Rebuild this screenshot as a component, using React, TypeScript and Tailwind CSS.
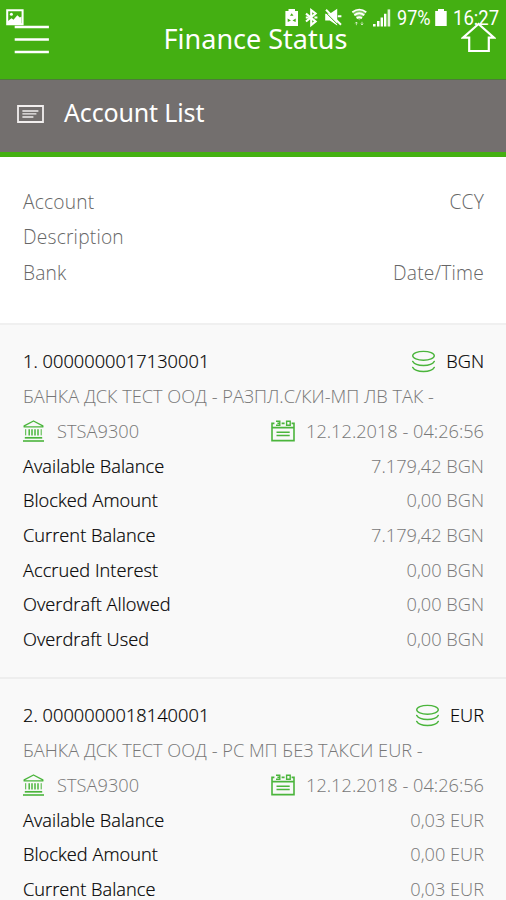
interface BalanceRow {
  label: string;
  amount: string;
}

interface Account {
  number: string;
  currency: string;
  description: string;
  bank: string;
  updatedAt: string;
  balances: BalanceRow[];
}

const accounts: Account[] = [
  {
    number: "1. 0000000017130001",
    currency: "BGN",
    description: "БАНКА ДСК ТЕСТ ООД - РАЗПЛ.С/КИ-МП ЛВ ТАК -",
    bank: "STSA9300",
    updatedAt: "12.12.2018 - 04:26:56",
    balances: [
      { label: "Available Balance", amount: "7.179,42 BGN" },
      { label: "Blocked Amount", amount: "0,00 BGN" },
      { label: "Current Balance", amount: "7.179,42 BGN" },
      { label: "Accrued Interest", amount: "0,00 BGN" },
      { label: "Overdraft Allowed", amount: "0,00 BGN" },
      { label: "Overdraft Used", amount: "0,00 BGN" },
    ],
  },
  {
    number: "2. 0000000018140001",
    currency: "EUR",
    description: "БАНКА ДСК ТЕСТ ООД - РС МП БЕЗ ТАКСИ EUR -",
    bank: "STSA9300",
    updatedAt: "12.12.2018 - 04:26:56",
    balances: [
      { label: "Available Balance", amount: "0,03 EUR" },
      { label: "Blocked Amount", amount: "0,00 EUR" },
      { label: "Current Balance", amount: "0,03 EUR" },
    ],
  },
];

const CoinsIcon = () => (
  <svg width="24" height="24" viewBox="0 0 24 24" fill="none" stroke="#4bb53c" strokeWidth="1.4" strokeLinecap="round">
    <ellipse cx="12.5" cy="5.8" rx="10.8" ry="4.4" />
    <path d="M1.7 11.4c1.6 2.8 5.8 4.1 10.8 4.1s9.2-1.3 10.8-4.1" />
    <path d="M1.7 17.4c1.6 2.8 5.8 4.1 10.8 4.1s9.2-1.3 10.8-4.1" />
  </svg>
);

const BankIcon = () => (
  <svg width="21" height="22" viewBox="0 0 21 22" fill="none" stroke="#4bb53c" strokeWidth="1.4">
    <path d="M1.2 6.9V5.8L10.5 1l9.3 4.8v1.1z" strokeLinejoin="round" />
    <path d="M2.7 9.2v6.2M18.2 9.2v6.2" strokeWidth="1" />
    <path d="M6.2 9.2v6.2M9 9.2v6.2M12 9.2v6.2M15 9.2v6.2" strokeWidth="1.5" />
    <path d="M1.8 17.8h17.4" strokeWidth="1.7" />
    <path d="M0 21h21" strokeWidth="1.6" />
  </svg>
);

const CalendarIcon = () => (
  <svg width="24" height="22" viewBox="0 0 24 22" fill="none" stroke="#4bb53c" strokeWidth="1.6">
    <path d="M3.4 3.4H1v17.2h22V3.4h-2.4M10.6 3.4h3M1 7.6h22" />
    <path d="M5 1.3h3.8v3.9H5M6.4 3.3h2.2M15.6 1.3h3.6v3.9h-3.6z" strokeWidth="1.4" />
    <path d="M5.5 12.3h13.2M5.5 15.4h13.2" strokeWidth="1.5" />
  </svg>
);

const StatusBar = () => (
  <div className="absolute inset-x-0 top-0 h-9 text-white">
    <svg className="absolute left-0 top-0" width="30" height="30" viewBox="0 0 30 30">
      <path d="M7.2 10.2h15.4v14H7.2z" fill="none" stroke="white" strokeWidth="2" />
      <circle cx="11.4" cy="14.2" r="1.5" fill="white" />
      <path d="M8 21l3.5-2.8 2 1.6 3.8-4.6 2.6 2.4 1.6-1V24H8z" fill="white" />
    </svg>
    <svg className="absolute left-[280px] top-0" width="226" height="34" viewBox="280 0 226 34" fill="white">
      <path fillRule="evenodd" d="M288.5 9h6.5v2h3v15h-12.6V11h3.1zM291.7 13.2l-1.7 2.6h3.5zM287.6 18.5l.2 3.6 3.1-1.7zM295.8 18.5l-.2 3.6-3.1-1.7z" />
      <path d="M306 13.6l9.6 7.8-4.4 3.6V10.2l4.4 3.3-9.6 8" fill="none" stroke="white" strokeWidth="2.1" />
      <path d="M305.8 17.5h3M314.4 17.5h3" stroke="white" strokeWidth="2" />
      <path d="M325.2 13.8h4.6l7.4-5v16.8l-7.4-5.2h-4.6z" />
      <path d="M324.4 11.2l14 14" stroke="#44af12" strokeWidth="1" />
      <path d="M326 9.8l15 15M337.8 16.2h3.6" stroke="white" strokeWidth="2" />
      <path d="M352.5 12.6q6.8-5.4 13.6 0l-6.8 7.8z" opacity=".35" />
      <path d="M352.3 12.3q7-5.4 14 0M354.3 15.2q5-4 10 0M356.6 18.3q2.7-2.2 5.4 0" fill="none" stroke="white" strokeWidth="1.8" />
      <path d="M356.4 25.2v-3M355.2 23.4l1.2-1.4 1.2 1.4M362 21.8v3M360.8 23.6l1.2 1.4 1.2-1.4" fill="none" stroke="white" strokeWidth=".9" opacity=".7" />
      <path d="M373 24h2.6v2.5H373zM377 21h2.5v5.5H377zM380.6 17.5h2.4v9h-2.4zM384 13.8h2.4v12.7H384z" />
      <path d="M387.6 9.4h2.6v17.1h-2.6z" opacity=".85" />
      <path d="M438 9h6v2.1h2.7V26h-11.5V11.1h2.8z" />
    </svg>
    <span className="absolute left-[397px] top-[6px] origin-left scale-x-[.86] whitespace-nowrap font-[Roboto,sans-serif] text-[21px] font-normal leading-6">97%</span>
    <span className="absolute left-[453px] top-[6px] origin-left scale-x-[.88] whitespace-nowrap font-[Roboto,sans-serif] text-[21px] font-normal leading-6">16:27</span>
  </div>
);

const AccountCard = ({ account }: { account: Account }) => (
  <section className="h-[354px] border-b-2 border-[#eeeeee] bg-[#f9f9f9] pr-[22px] pl-[23px] pt-[19.4px] leading-[34.7px]">
    <div className="flex justify-between">
      <span className="text-black tracking-[0.04px] [-webkit-text-stroke:0.2px]">{account.number}</span>
      <span className="flex items-center gap-[11px] text-black [-webkit-text-stroke:0.2px]">
        <CoinsIcon />
        {account.currency}
      </span>
    </div>
    <div className="whitespace-nowrap text-[#777]">{account.description}</div>
    <div className="flex justify-between text-[#777]">
      <span className="flex items-center gap-[13px] tracking-[0.05px]">
        <BankIcon />
        {account.bank}
      </span>
      <span className="flex items-center gap-[11px]">
        <CalendarIcon />
        {account.updatedAt}
      </span>
    </div>
    {account.balances.map((row) => (
      <div key={row.label} className="flex justify-between">
        <span className="text-black tracking-[0.04px] [-webkit-text-stroke:0.2px]">{row.label}</span>
        <span className="text-[#777]">{row.amount}</span>
      </div>
    ))}
  </section>
);

const App = () => {
  return (
    <div className="relative h-[900px] w-[506px] overflow-hidden bg-white font-['Open_Sans',sans-serif] text-[18.2px] font-light">
      <header className="flex h-[80px] items-start justify-between border-b border-[#4d7a3a] bg-[#44af12] pl-[14px] pr-[10px]">
        <svg className="mt-[25px]" width="36" height="30" viewBox="0 0 36 30" stroke="white" strokeWidth="2.4">
          <path d="M.7 2h34.2M.7 14.5h34.2M.7 27h34.2" />
        </svg>
        <h1 className="pt-[20px] font-['Noto_Sans',sans-serif] text-[27px] font-normal leading-[38px] text-white">Finance Status</h1>
        <svg className="mt-[22px]" width="35" height="31" viewBox="0 0 35 31" fill="none" stroke="white" strokeWidth="2.2">
          <path d="M17.5 2L2 15.6h6.2V29h19.6V15.6H33z" />
        </svg>
      </header>

      <div className="flex h-[77px] items-center border-b-[5px] border-[#44af12] bg-[#736f6e] pb-[4px] pl-[17px] text-white">
        <svg width="27" height="18" viewBox="0 0 27 18" fill="none" stroke="#f2efef">
          <path d="M1 1h25v16H1z" strokeWidth="1.8" />
          <path d="M5.4 6h16M5.4 8.9h14M5.4 12h11" strokeWidth="1.3" />
        </svg>
        <h2 className="ml-[20px] pb-[4px] font-['Noto_Sans',sans-serif] text-[25px] font-normal leading-8 tracking-[-0.15px]">Account List</h2>
      </div>

      <div className="h-[168px] border-b-2 border-[#f0f0f0] pr-[22px] pl-[23px] pt-[27px] text-[19.2px] leading-[35.3px] tracking-[0.2px] text-[#666]">
        <div className="flex justify-between">
          <span>Account</span>
          <span>CCY</span>
        </div>
        <div>Description</div>
        <div className="flex justify-between">
          <span>Bank</span>
          <span>Date/Time</span>
        </div>
      </div>

      {accounts.map((account) => (
        <AccountCard key={account.number} account={account} />
      ))}

      <StatusBar />
    </div>
  );
};

export default App;
